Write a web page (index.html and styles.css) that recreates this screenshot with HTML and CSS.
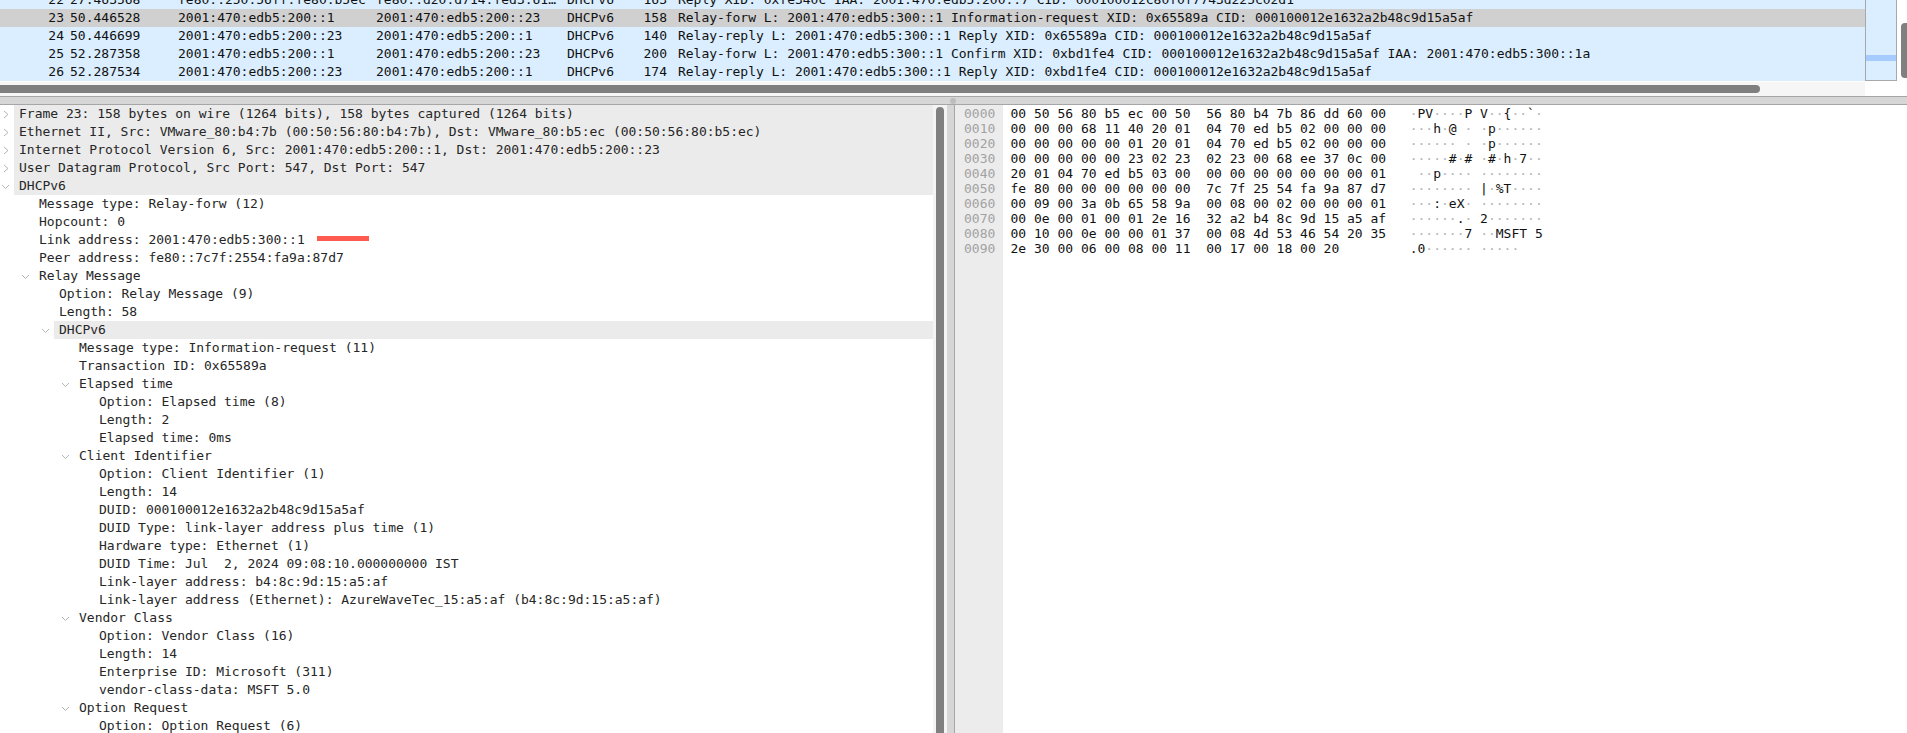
FILE: index.html
```html
<!DOCTYPE html>
<html lang="en">
<head>
<meta charset="utf-8">
<title>Wireshark DHCPv6 capture</title>
<link rel="stylesheet" href="styles.css">
</head>
<body>
<section class="list">
  <div class="rows">
    <div class="pkt first"><span class="no">22</span><span class="time">27.463568</span><span class="src">fe80::250:56ff:fe80:b5ec</span><span class="dst">fe80::d20:d714:fed3:61…</span><span class="proto">DHCPv6</span><span class="len">163</span><span class="info">Reply XID: 0xfe340c IAA: 2001:470:edb5:200::7 CID: 000100012c80f0f7743d225c02d1</span></div>
    <div class="pkt selected"><span class="no">23</span><span class="time">50.446528</span><span class="src">2001:470:edb5:200::1</span><span class="dst">2001:470:edb5:200::23</span><span class="proto">DHCPv6</span><span class="len">158</span><span class="info">Relay-forw L: 2001:470:edb5:300::1 Information-request XID: 0x65589a CID: 000100012e1632a2b48c9d15a5af</span></div>
    <div class="pkt"><span class="no">24</span><span class="time">50.446699</span><span class="src">2001:470:edb5:200::23</span><span class="dst">2001:470:edb5:200::1</span><span class="proto">DHCPv6</span><span class="len">140</span><span class="info">Relay-reply L: 2001:470:edb5:300::1 Reply XID: 0x65589a CID: 000100012e1632a2b48c9d15a5af</span></div>
    <div class="pkt"><span class="no">25</span><span class="time">52.287358</span><span class="src">2001:470:edb5:200::1</span><span class="dst">2001:470:edb5:200::23</span><span class="proto">DHCPv6</span><span class="len">200</span><span class="info">Relay-forw L: 2001:470:edb5:300::1 Confirm XID: 0xbd1fe4 CID: 000100012e1632a2b48c9d15a5af IAA: 2001:470:edb5:300::1a</span></div>
    <div class="pkt"><span class="no">26</span><span class="time">52.287534</span><span class="src">2001:470:edb5:200::23</span><span class="dst">2001:470:edb5:200::1</span><span class="proto">DHCPv6</span><span class="len">174</span><span class="info">Relay-reply L: 2001:470:edb5:300::1 Reply XID: 0xbd1fe4 CID: 000100012e1632a2b48c9d15a5af</span></div>
  </div>
  <div class="minimap"><div class="mark"></div></div>
  <div class="vbar"><div class="vthumb"></div></div>
</section>
<div class="hscroll"><div class="track"><div class="hthumb"></div></div></div>
<div class="sash"><span class="sash-dot"></span></div>
<main class="panes">
  <section class="tree">
    <div class="tree-rows">
      <div class="node"><span class="tw"><svg class="chev" viewBox="0 0 9 9"><path d="M3 1l4 3.5-4 3.5"/></svg></span><span class="label band">Frame 23: 158 bytes on wire (1264 bits), 158 bytes captured (1264 bits)</span></div>
      <div class="node"><span class="tw"><svg class="chev" viewBox="0 0 9 9"><path d="M3 1l4 3.5-4 3.5"/></svg></span><span class="label band">Ethernet II, Src: VMware_80:b4:7b (00:50:56:80:b4:7b), Dst: VMware_80:b5:ec (00:50:56:80:b5:ec)</span></div>
      <div class="node"><span class="tw"><svg class="chev" viewBox="0 0 9 9"><path d="M3 1l4 3.5-4 3.5"/></svg></span><span class="label band">Internet Protocol Version 6, Src: 2001:470:edb5:200::1, Dst: 2001:470:edb5:200::23</span></div>
      <div class="node"><span class="tw"><svg class="chev" viewBox="0 0 9 9"><path d="M3 1l4 3.5-4 3.5"/></svg></span><span class="label band">User Datagram Protocol, Src Port: 547, Dst Port: 547</span></div>
      <div class="node"><span class="tw"><svg class="chev" viewBox="0 0 9 9"><path d="M1 3l3.5 3.5L8 3"/></svg></span><span class="label band">DHCPv6</span></div>
      <div class="node l1"><span class="tw"></span><span class="label">Message type: Relay-forw (12)</span></div>
      <div class="node l1"><span class="tw"></span><span class="label">Hopcount: 0</span></div>
      <div class="node l1"><span class="tw"></span><span class="label">Link address: 2001:470:edb5:300::1<span class="redline"></span></span></div>
      <div class="node l1"><span class="tw"></span><span class="label">Peer address: fe80::7c7f:2554:fa9a:87d7</span></div>
      <div class="node l1"><span class="tw"><svg class="chev" viewBox="0 0 9 9"><path d="M1 3l3.5 3.5L8 3"/></svg></span><span class="label">Relay Message</span></div>
      <div class="node l2"><span class="tw"></span><span class="label">Option: Relay Message (9)</span></div>
      <div class="node l2"><span class="tw"></span><span class="label">Length: 58</span></div>
      <div class="node l2"><span class="tw"><svg class="chev" viewBox="0 0 9 9"><path d="M1 3l3.5 3.5L8 3"/></svg></span><span class="label band">DHCPv6</span></div>
      <div class="node l3"><span class="tw"></span><span class="label">Message type: Information-request (11)</span></div>
      <div class="node l3"><span class="tw"></span><span class="label">Transaction ID: 0x65589a</span></div>
      <div class="node l3"><span class="tw"><svg class="chev" viewBox="0 0 9 9"><path d="M1 3l3.5 3.5L8 3"/></svg></span><span class="label">Elapsed time</span></div>
      <div class="node l4"><span class="tw"></span><span class="label">Option: Elapsed time (8)</span></div>
      <div class="node l4"><span class="tw"></span><span class="label">Length: 2</span></div>
      <div class="node l4"><span class="tw"></span><span class="label">Elapsed time: 0ms</span></div>
      <div class="node l3"><span class="tw"><svg class="chev" viewBox="0 0 9 9"><path d="M1 3l3.5 3.5L8 3"/></svg></span><span class="label">Client Identifier</span></div>
      <div class="node l4"><span class="tw"></span><span class="label">Option: Client Identifier (1)</span></div>
      <div class="node l4"><span class="tw"></span><span class="label">Length: 14</span></div>
      <div class="node l4"><span class="tw"></span><span class="label">DUID: 000100012e1632a2b48c9d15a5af</span></div>
      <div class="node l4"><span class="tw"></span><span class="label">DUID Type: link-layer address plus time (1)</span></div>
      <div class="node l4"><span class="tw"></span><span class="label">Hardware type: Ethernet (1)</span></div>
      <div class="node l4"><span class="tw"></span><span class="label">DUID Time: Jul  2, 2024 09:08:10.000000000 IST</span></div>
      <div class="node l4"><span class="tw"></span><span class="label">Link-layer address: b4:8c:9d:15:a5:af</span></div>
      <div class="node l4"><span class="tw"></span><span class="label">Link-layer address (Ethernet): AzureWaveTec_15:a5:af (b4:8c:9d:15:a5:af)</span></div>
      <div class="node l3"><span class="tw"><svg class="chev" viewBox="0 0 9 9"><path d="M1 3l3.5 3.5L8 3"/></svg></span><span class="label">Vendor Class</span></div>
      <div class="node l4"><span class="tw"></span><span class="label">Option: Vendor Class (16)</span></div>
      <div class="node l4"><span class="tw"></span><span class="label">Length: 14</span></div>
      <div class="node l4"><span class="tw"></span><span class="label">Enterprise ID: Microsoft (311)</span></div>
      <div class="node l4"><span class="tw"></span><span class="label">vendor-class-data: MSFT 5.0</span></div>
      <div class="node l3"><span class="tw"><svg class="chev" viewBox="0 0 9 9"><path d="M1 3l3.5 3.5L8 3"/></svg></span><span class="label">Option Request</span></div>
      <div class="node l4"><span class="tw"></span><span class="label">Option: Option Request (6)</span></div>
    </div>
    <div class="tree-bar"><div class="tree-thumb"></div></div>
  </section>
  <div class="vsash"></div>
  <section class="hex">
    <div class="offsets">
      <div>0000</div><div>0010</div><div>0020</div><div>0030</div><div>0040</div><div>0050</div><div>0060</div><div>0070</div><div>0080</div><div>0090</div>
    </div>
    <div class="bytes">
      <div>00 50 56 80 b5 ec 00 50  56 80 b4 7b 86 dd 60 00   <i>·</i>PV<i>····</i>P V<i>··</i>{<i>··</i>`<i>·</i></div>
      <div>00 00 00 68 11 40 20 01  04 70 ed b5 02 00 00 00   <i>···</i>h<i>·</i>@ <i>·</i> <i>·</i>p<i>······</i></div>
      <div>00 00 00 00 00 01 20 01  04 70 ed b5 02 00 00 00   <i>······</i> <i>·</i> <i>·</i>p<i>······</i></div>
      <div>00 00 00 00 00 23 02 23  02 23 00 68 ee 37 0c 00   <i>·····</i>#<i>·</i># <i>·</i>#<i>·</i>h<i>·</i>7<i>··</i></div>
      <div>20 01 04 70 ed b5 03 00  00 00 00 00 00 00 00 01    <i>··</i>p<i>····</i> <i>········</i></div>
      <div>fe 80 00 00 00 00 00 00  7c 7f 25 54 fa 9a 87 d7   <i>········</i> |<i>·</i>%T<i>····</i></div>
      <div>00 09 00 3a 0b 65 58 9a  00 08 00 02 00 00 00 01   <i>···</i>:<i>·</i>eX<i>·</i> <i>········</i></div>
      <div>00 0e 00 01 00 01 2e 16  32 a2 b4 8c 9d 15 a5 af   <i>······</i>.<i>·</i> 2<i>·······</i></div>
      <div>00 10 00 0e 00 00 01 37  00 08 4d 53 46 54 20 35   <i>·······</i>7 <i>··</i>MSFT 5</div>
      <div>2e 30 00 06 00 08 00 11  00 17 00 18 00 20         .0<i>······</i> <i>·····</i></div>
    </div>
  </section>
</main>
</body>
</html>
```

FILE: styles.css
```css
* { box-sizing: border-box; }

html, body {
  margin: 0;
  height: 733px;
  overflow: hidden;
  background: #fff;
}

body {
  display: flex;
  flex-direction: column;
  font: 13px/18px "DejaVu Sans Mono", "Liberation Mono", monospace;
  color: #111;
}

/* packet list */
.list {
  display: flex;
  height: 82px;
  flex: none;
  overflow: hidden;
}

.rows {
  width: 1865px;
  flex: none;
  background: #daeeff;
  height: 81px;
  overflow: hidden;
}

.pkt {
  display: flex;
  height: 18px;
  white-space: pre;
}

.pkt.first { margin-top: -9px; }
.pkt.selected { background: #d0d0d0; }

.no { width: 64px; text-align: right; flex: none; }
.time { width: 114px; padding-left: 6px; flex: none; }
.src { width: 198px; flex: none; }
.dst { width: 191px; flex: none; }
.proto { width: 66px; flex: none; }
.len { width: 34px; text-align: right; flex: none; }
.info { padding-left: 11px; flex: none; letter-spacing: -0.03px; }

.minimap {
  width: 32px;
  height: 81px;
  flex: none;
  background: #daeeff;
  border: 1px solid #a8a8a8;
  border-top: 0;
  padding-top: 55px;
}

.mark { height: 6px; background: #a6cbff; }

.vbar {
  flex: 1;
  padding: 23px 0 0 4px;
}

.vthumb {
  height: 55px;
  background: #808080;
  border-radius: 4px 0 0 4px;
}

/* horizontal scrollbar */
.hscroll {
  height: 14px;
  flex: none;
  background: #fff;
}

.track {
  width: 1865px;
  height: 14px;
  padding-top: 3px;
  background: #f6f6f6;
}

.hthumb {
  width: 1760px;
  height: 8px;
  background: #7f7f7f;
  border-radius: 0 4px 4px 0;
}

/* horizontal sash */
.sash {
  height: 9px;
  flex: none;
  background: #d6d6d6;
  border-top: 1px solid #a6a6a6;
  border-bottom: 1px solid #a6a6a6;
  display: flex;
  align-items: center;
  padding-left: 950px;
}

.sash-dot {
  width: 6px;
  height: 6px;
  border-radius: 50%;
  background: #bdbdbd;
}

/* panes */
.panes {
  flex: 1;
  display: flex;
  min-height: 0;
  overflow: hidden;
}

.tree {
  width: 947px;
  flex: none;
  display: flex;
}

.tree-rows {
  width: 933px;
  flex: none;
  color: #262626;
  letter-spacing: -0.012px;
}

.node {
  display: flex;
  height: 18px;
  white-space: pre;
}

.l1 { padding-left: 20px; }
.l2 { padding-left: 40px; }
.l3 { padding-left: 60px; }
.l4 { padding-left: 80px; }

.tw {
  width: 14px;
  flex: none;
  display: flex;
  align-items: center;
  padding-left: 1px;
}

.chev {
  width: 9px;
  height: 9px;
  fill: none;
  stroke: #b4b4b4;
  stroke-width: 1;
}

.label {
  flex: 1;
  padding-left: 5px;
}

.band { background: #ebebeb; }

.redline {
  display: inline-block;
  width: 52px;
  height: 5px;
  margin: 0 0 5px 12px;
  vertical-align: middle;
  background: #ff5a4f;
}

.tree-bar {
  flex: 1;
  padding: 2px 3px 0 3px;
  background: #f4f4f4;
}

.tree-thumb {
  height: 700px;
  background: #808080;
  border-radius: 4px 4px 0 0;
}

.vsash {
  width: 8px;
  flex: none;
  background: #d6d6d6;
  border-right: 1px solid #a6a6a6;
}

.hex {
  flex: 1;
  display: flex;
  font-size: 13px;
  line-height: 15px;
  color: #111;
}

.offsets {
  width: 48px;
  flex: none;
  padding: 1px 0 0 9px;
  background: #ececec;
  color: #a2a2a2;
}

.bytes {
  flex: 1;
  padding: 1px 0 0 7.5px;
}

.bytes > div {
  white-space: pre;
}

.bytes i {
  font-style: normal;
  color: #b4b4b4;
}
```
